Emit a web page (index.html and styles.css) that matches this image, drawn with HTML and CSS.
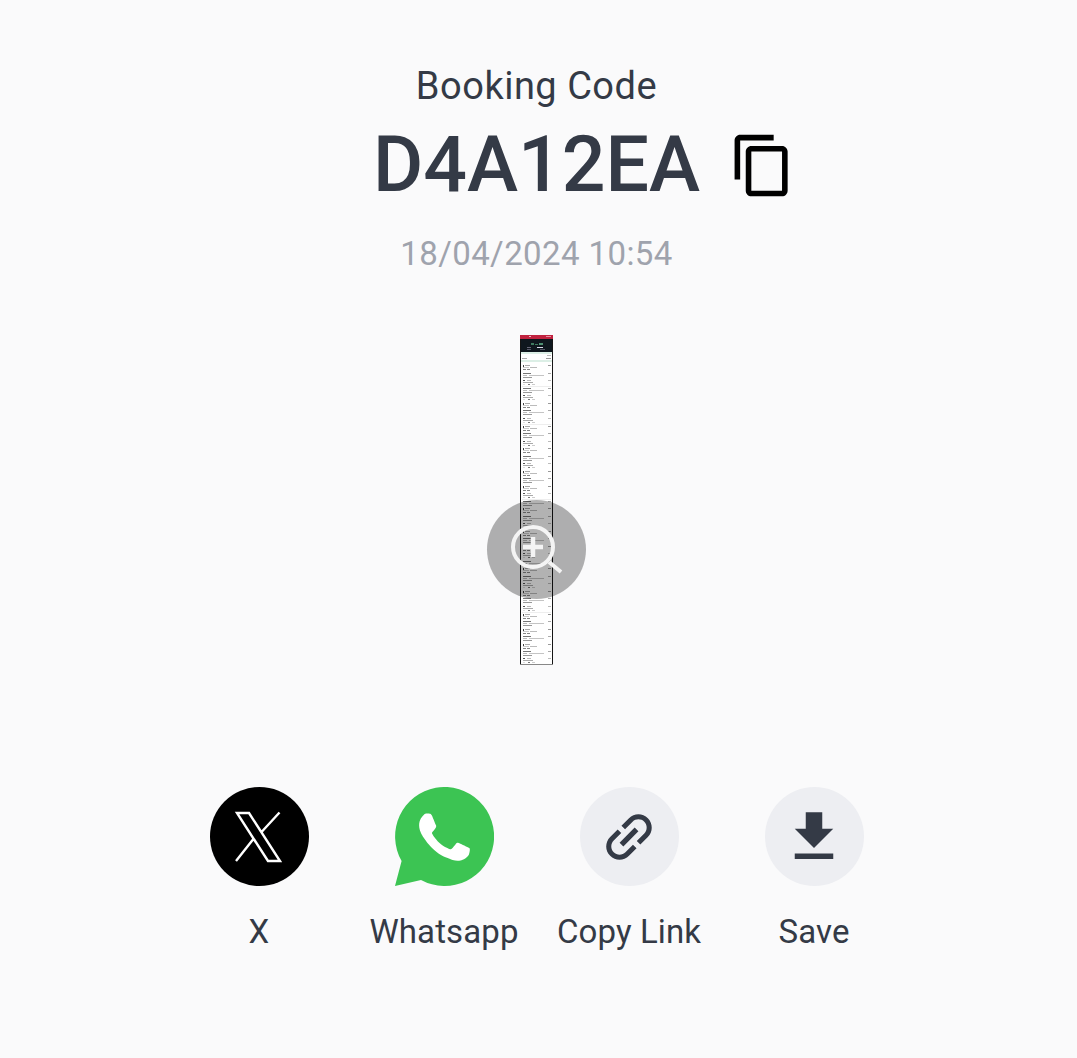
FILE: index.html
```html
<!DOCTYPE html>
<html lang="en">
<head>
  <meta charset="UTF-8" />
  <meta name="viewport" content="width=device-width, initial-scale=1.0"/>
  <title>Booking Code</title>
  <link rel="stylesheet" href="styles.css">
</head>
<body>
  <main class="page">
    <p class="code-label">Booking Code</p>
    <div class="code-row">
      <h1 class="code">D4A12EA</h1>
      <svg class="copy-icon" viewBox="0 0 24 24"><path d="M16 1H4c-1.100 0-2 .9-2 2v14h2V3h12V1zm3 4H8c-1.100 0-2 .9-2 2v14c0 1.100.9 2 2 2h11c1.100 0 2-.9 2-2V7c0-1.100-.9-2-2-2zm0 16H8V7h11v14z"/></svg>
    </div>
    <p class="code-date">18/04/2024 10:54</p>

    <div class="preview">
      <svg class="receipt" viewBox="0 0 33 330" width="33" height="330">
        <defs>
          <g id="row-a">
            <rect x="3" y="0" width="1" height="2" fill="#444"/><rect x="5" y="0" width="5" height="1" fill="#aaa"/><rect x="28" y="0" width="3" height="1" fill="#999"/>
            <rect x="3" y="2" width="6" height="1" fill="#ccc"/><rect x="10" y="2" width="7" height="1" fill="#bbb"/>
            <rect x="3" y="4" width="3" height="1" fill="#888"/><rect x="7" y="4" width="3" height="1" fill="#888"/>
          </g>
          <g id="row-b">
            <rect x="3" y="0" width="8" height="1" fill="#777"/><rect x="28" y="0" width="3" height="1" fill="#aaa"/>
            <rect x="3" y="2" width="4" height="1" fill="#bbb"/><rect x="9" y="2" width="15" height="1" fill="#c4c4c4"/>
            <rect x="3" y="4" width="9" height="1" fill="#999"/>
          </g>
          <g id="row-c">
            <rect x="3" y="0" width="2" height="1" fill="#555"/><rect x="7" y="0" width="4" height="1" fill="#bbb"/><rect x="28" y="0" width="3" height="1" fill="#bbb"/>
            <rect x="3" y="2" width="10" height="1" fill="#aaa"/>
            <rect x="3" y="4" width="2" height="1" fill="#ddd"/><rect x="8" y="4" width="2" height="1" fill="#777"/><rect x="12" y="4" width="3" height="1" fill="#ccc"/>
          </g>
        </defs>
        <rect width="33" height="330" fill="#fff"/>
        <rect width="33" height="4" fill="#c0223f"/>
        <rect x="9" y="1" width="2" height="1" fill="#f0b8c4"/><rect x="26" y="1" width="5" height="1" fill="#e88ca0"/>
        <rect y="4" width="33" height="13" fill="#0f171e"/>
        <rect x="11" y="8" width="3" height="2" fill="#3f7a60"/><rect x="15" y="9" width="3" height="1" fill="#3f7a60"/><rect x="19" y="8" width="4" height="2" fill="#4f8f72"/>
        <rect x="7" y="12" width="4" height="1" fill="#667"/><rect x="17" y="12" width="6" height="1" fill="#dde"/>
        <rect x="7" y="14" width="4" height="1" fill="#556"/><rect x="20" y="14" width="5" height="1" fill="#556"/>
        <rect x="1" y="17" width="31" height="2" fill="#dcefe6"/>
        <rect x="27" y="20" width="4" height="1" fill="#bbb"/>
        <rect x="2" y="23" width="5" height="1" fill="#aaa"/><rect x="26" y="23" width="5" height="1" fill="#999"/>
        <rect x="1" y="25" width="31" height="2" fill="#dcefe6"/>
        <use href="#row-a" y="30"/><use href="#row-b" y="38"/><use href="#row-c" y="45"/>
        <rect x="2" y="51" width="29" height="1" fill="#eee"/>
        <use href="#row-b" y="53"/><use href="#row-c" y="60"/><use href="#row-a" y="68"/><use href="#row-b" y="75"/><use href="#row-c" y="83"/>
        <rect x="2" y="89" width="29" height="1" fill="#eee"/>
        <use href="#row-a" y="91"/><use href="#row-b" y="98"/><use href="#row-c" y="106"/><use href="#row-a" y="113"/><use href="#row-b" y="121"/>
        <use href="#row-c" y="128"/><use href="#row-a" y="136"/><use href="#row-b" y="143"/><use href="#row-a" y="151"/><use href="#row-c" y="158"/>
        <rect x="2" y="164" width="29" height="1" fill="#eee"/>
        <use href="#row-b" y="166"/><use href="#row-a" y="173"/><use href="#row-b" y="181"/><use href="#row-c" y="188"/><use href="#row-a" y="196"/>
        <use href="#row-b" y="203"/><use href="#row-a" y="211"/><use href="#row-c" y="218"/><use href="#row-b" y="226"/><use href="#row-a" y="233"/>
        <use href="#row-b" y="241"/><use href="#row-c" y="248"/><use href="#row-a" y="256"/><use href="#row-b" y="263"/><use href="#row-c" y="271"/>
        <rect x="2" y="277" width="29" height="1" fill="#eee"/>
        <use href="#row-a" y="279"/><use href="#row-b" y="286"/><use href="#row-a" y="294"/><use href="#row-b" y="301"/><use href="#row-a" y="309"/>
        <use href="#row-b" y="316"/><use href="#row-c" y="323"/>
        <rect x="0" y="4" width="1" height="326" fill="#151515"/><rect x="32" y="4" width="1" height="326" fill="#151515"/>
        <rect y="329" width="33" height="1" fill="#888"/>
      </svg>
      <div class="zoom-badge">
        <svg viewBox="0 0 99 99" width="99" height="99">
          <circle cx="46" cy="47" r="20" fill="none" stroke="#f4f4f4" stroke-width="4"/>
          <path d="M46 37v20M36 47h20" fill="none" stroke="#f4f4f4" stroke-width="4.500"/>
          <path d="M62 62l12 10" fill="none" stroke="#f4f4f4" stroke-width="4"/>
        </svg>
      </div>
    </div>

    <ul class="share-list">
      <li class="share-item">
        <svg class="share-icon" viewBox="0 0 99 99">
          <circle cx="49.500" cy="49.500" r="49.500" fill="#000"/>
          <path d="M27 26h12l31 48H58zM69.500 25.500L52 44.500M43 52.500L26 74" fill="none" stroke="#fff" stroke-width="2.400"/>
        </svg>
        <span class="share-name">X</span>
      </li>
      <li class="share-item">
        <svg class="share-icon" viewBox="0 0 99 99">
          <path d="M6.600 74L0 99l26-6A49.500 49.500 0 1 0 6.600 74z" fill="#3cc453"/>
          <path transform="translate(-1.100 -.3) scale(4.200)" fill="#fff" d="M17.472 14.382c-.297-.149-1.758-.867-2.030-.967-.273-.099-.471-.148-.670.150-.197.297-.767.966-.940 1.164-.173.199-.347.223-.644.075-.297-.150-1.255-.463-2.390-1.475-.883-.788-1.480-1.761-1.653-2.059-.173-.297-.018-.458.130-.606.134-.133.298-.347.446-.520.149-.174.198-.298.298-.497.099-.198.050-.371-.025-.520-.075-.149-.669-1.612-.916-2.207-.242-.579-.487-.500-.669-.510-.173-.008-.371-.010-.570-.010-.198 0-.520.074-.792.372-.272.297-1.040 1.016-1.040 2.479 0 1.462 1.065 2.875 1.213 3.074.149.198 2.096 3.200 5.077 4.487.709.306 1.262.489 1.694.625.712.227 1.360.195 1.871.118.571-.085 1.758-.719 2.006-1.413.248-.694.248-1.289.173-1.413-.074-.124-.272-.198-.570-.347z"/>
        </svg>
        <span class="share-name">Whatsapp</span>
      </li>
      <li class="share-item">
        <div class="share-icon share-icon-grey">
          <svg class="link-glyph" viewBox="0 0 24 24"><path d="M3.900 12c0-1.710 1.390-3.100 3.100-3.100h4V7H7c-2.760 0-5 2.240-5 5s2.240 5 5 5h4v-1.900H7c-1.710 0-3.100-1.390-3.100-3.100zM8 13h8v-2H8v2zm9-6h-4v1.900h4c1.710 0 3.100 1.390 3.100 3.100s-1.390 3.100-3.100 3.100h-4V17h4c2.760 0 5-2.240 5-5s-2.240-5-5-5z"/></svg>
        </div>
        <span class="share-name">Copy Link</span>
      </li>
      <li class="share-item">
        <div class="share-icon share-icon-grey">
          <svg class="save-glyph" viewBox="0 0 24 24"><path d="M19 9h-4V3H9v6H5l7 7 7-7zM5 18v2h14v-2H5z"/></svg>
        </div>
        <span class="share-name">Save</span>
      </li>
    </ul>
  </main>
</body>
</html>
```
FILE: styles.css
```css
body {
  font-family: Roboto, "Noto Sans", sans-serif;
  margin: 0;
  padding: 0;
  background-color: #fafafb;
  color: #343a46;
}
.page {
  width: 1073px;
  height: 1058px;
  overflow: hidden;
  display: flex;
  flex-direction: column;
  align-items: center;
  padding-top: 64px;
  box-sizing: border-box;
}
.code-label {
  margin: 0;
  font-size: 38px;
  letter-spacing: 0.5px;
  line-height: 44px;
}
.code-row {
  display: grid;
  grid-template-columns: 1fr auto 1fr;
  align-items: center;
  width: 100%;
  height: 88px;
  margin-top: 13px;
}
.code {
  grid-column: 2;
  margin: 0;
  font-size: 77px;
  font-weight: 500;
  line-height: 88px;
}
.copy-icon {
  width: 67px;
  height: 67px;
  margin-left: 29px;
  fill: #000;
}
.code-date {
  margin: 25px 0 0;
  font-size: 33px;
  letter-spacing: 0.4px;
  line-height: 40px;
  color: #9fa3ad;
}
.preview {
  position: relative;
  width: 33px;
  height: 330px;
  margin-top: 61px;
}
.receipt {
  display: block;
  filter: blur(0.3px);
}
.zoom-badge {
  position: absolute;
  top: 165px;
  left: -33px;
  width: 99px;
  height: 99px;
  border-radius: 50%;
  background-color: rgba(0, 0, 0, 0.3);
}
.zoom-badge svg {
  display: block;
}
.share-list {
  display: flex;
  list-style: none;
  margin: 122px 0 0;
  padding: 0;
}
.share-item {
  width: 185px;
  display: flex;
  flex-direction: column;
  align-items: center;
  gap: 26px;
}
.share-icon {
  display: flex;
  align-items: center;
  justify-content: center;
  width: 99px;
  height: 99px;
}
.share-icon-grey {
  border-radius: 50%;
  background-color: #edeef2;
}
.link-glyph {
  width: 64px;
  height: 64px;
  fill: #343a46;
  transform: rotate(-45deg);
}
.save-glyph {
  width: 66px;
  height: 66px;
  fill: #343a46;
}
.share-name {
  font-size: 33px;
  letter-spacing: 0.1px;
  line-height: 40px;
  white-space: nowrap;
}
```
